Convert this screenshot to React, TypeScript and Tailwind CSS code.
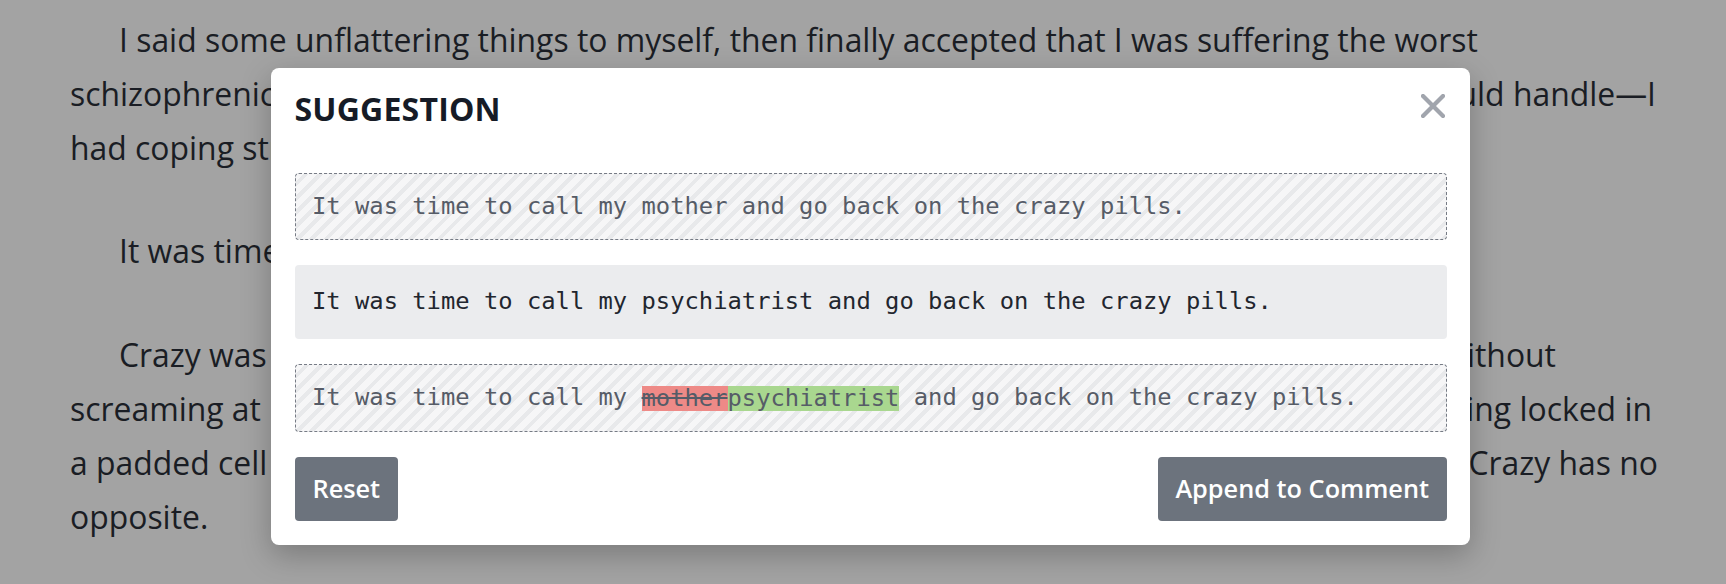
import React from 'react';

const mono = { fontFamily: '"DejaVu Sans Mono", "Liberation Mono", monospace' };

const Line: React.FC<{ left: string; right?: string; width?: string; indent?: boolean }> = ({ left, right, width, indent }) => {
  if (!right) {
    return <div className={`whitespace-nowrap ${indent ? 'pl-[49px]' : ''}`}>{left}</div>;
  }
  return (
    <div className={`flex justify-between whitespace-nowrap ${width ?? ''} ${indent ? 'pl-[49px]' : ''}`}>
      <span>{left}</span>
      <span>{right}</span>
    </div>
  );
};

const CloseIcon = () => (
  <svg width="24" height="24" viewBox="0 0 24 24" fill="none" stroke="#a1a5ad" strokeWidth="4.2" strokeLinecap="round">
    <path d="M2 2 L22 22" />
    <path d="M22 2 L2 22" />
  </svg>
);

const striped =
  'bg-[repeating-linear-gradient(-45deg,#e8e9eb_0px,#e8e9eb_4px,#f6f6f7_4px,#f6f6f7_10px)]';

const App: React.FC = () => {
  return (
    <div
      className="relative w-full h-[584px] overflow-hidden bg-[#a3a3a3] text-[#1a1d24]"
      style={{ fontFamily: '"Open Sans", "Noto Sans", sans-serif' }}
    >
      {/* Story text behind the dialog */}
      <div className="pl-[70px] pt-[13px] text-[31.9px] leading-[53.8px]">
        <div className="mb-[50px]">
          <Line indent left="I said some unflattering things to myself, then finally accepted that I was suffering the worst" />
          <Line left="schizophrenic episode of my life," right="nothing I could handle—I" width="w-[1586px]" />
          <Line left="had coping strategies." />
        </div>
        <div className="mb-[50px]">
          <Line indent left="It was time to call my mother and go back on the crazy pills." />
        </div>
        <div>
          <Line indent left="Crazy was the word" right="without" width="w-[1486px]" />
          <Line left="screaming at" right="being locked in" width="w-[1582px]" />
          <Line left="a padded cell" right="ever. Crazy has no" width="w-[1588px]" />
          <Line left="opposite." />
        </div>
      </div>

      {/* Suggestion dialog */}
      <div className="absolute left-[271px] top-[68px] w-[1199px] rounded-lg bg-white px-[23.5px] pt-[21px] pb-[24px] shadow-[0_10px_30px_rgba(0,0,0,0.25)]">
        <div className="flex items-center justify-between h-[40px]">
          <h2 className="text-[32px] font-bold tracking-[0.2px] text-[#161b26]">SUGGESTION</h2>
          <button className="-mt-[6px] mr-[2px]">
            <CloseIcon />
          </button>
        </div>

        <div className="mt-[44px] flex flex-col gap-[25px]">
          <div
            className={`flex h-[67px] items-center rounded-[4px] border border-dashed border-[#767b85] ${striped} px-[16.5px] text-[23.8px] text-[#565c67]`}
            style={mono}
          >
            It was time to call my mother and go back on the crazy pills.
          </div>

          <div
            className="flex h-[74px] items-center rounded-[4px] bg-[#ebecee] px-[17.5px] text-[23.8px] text-[#22262e]"
            style={mono}
          >
            It was time to call my psychiatrist and go back on the crazy pills.
          </div>

          <div
            className={`flex h-[68px] items-center whitespace-pre rounded-[4px] border border-dashed border-[#767b85] ${striped} px-[16.5px] text-[23.8px] text-[#565c67]`}
            style={mono}
          >
            <span>It was time to call my </span>
            <span className="bg-[#ee8a87] leading-[25px] line-through">mother</span>
            <span className="bg-[#a9d78f] leading-[25px]">psychiatrist</span>
            <span> and go back on the crazy pills.</span>
          </div>
        </div>

        <div className="mt-[25px] flex justify-between">
          <button className="h-[64px] rounded-[4px] bg-[#6c737d] px-[18px] text-[25.3px] font-semibold text-white">
            Reset
          </button>
          <button className="h-[64px] rounded-[4px] bg-[#6c737d] px-[17.5px] text-[25.3px] font-semibold text-white">
            Append to Comment
          </button>
        </div>
      </div>
    </div>
  );
};

export default App;
